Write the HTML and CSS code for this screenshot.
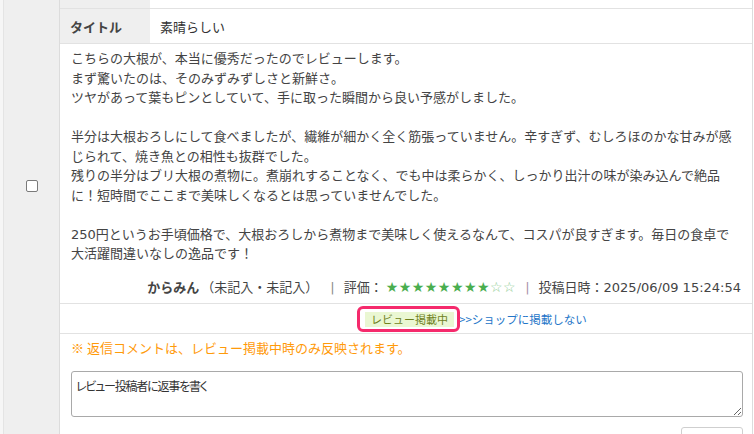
FILE: index.html
```html
<!DOCTYPE html>
<html lang="ja">
<head>
<meta charset="utf-8">
<title>レビュー詳細</title>
<link rel="stylesheet" href="styles.css">
</head>
<body>
<div class="page">
  <div class="check-col">
    <input type="checkbox" class="check" aria-label="選択">
  </div>
  <div class="detail">
    <div class="row row-top">
      <div class="label"></div>
      <div class="value"></div>
    </div>
    <div class="row row-title">
      <div class="label">タイトル</div>
      <div class="value">素晴らしい</div>
    </div>
    <div class="body">
      <p class="review">こちらの大根が、本当に優秀だったのでレビューします。<br>まず驚いたのは、そのみずみずしさと新鮮さ。<br>ツヤがあって葉もピンとしていて、手に取った瞬間から良い予感がしました。<br><br>半分は大根おろしにして食べましたが、繊維が細かく全く筋張っていません。辛すぎず、むしろほのかな甘みが感<br>じられて、焼き魚との相性も抜群でした。<br>残りの半分はブリ大根の煮物に。煮崩れすることなく、でも中は柔らかく、しっかり出汁の味が染み込んで絶品<br>に！短時間でここまで美味しくなるとは思っていませんでした。<br><br>250円というお手頃価格で、大根おろしから煮物まで美味しく使えるなんて、コスパが良すぎます。毎日の食卓で<br>大活躍間違いなしの逸品です！</p>
      <div class="meta"><b class="author">からみん</b><span>（未記入・未記入）</span><span class="sep">|</span>評価：<span class="stars">★★★★★★★★<span class="empty">☆☆</span></span><span class="sep sep-alt">|</span>投稿日時：2025/06/09 15:24:54</div>
    </div>
    <div class="status">
      <span class="badge-wrap"><span class="badge">レビュー掲載中</span></span><a class="toggle" href="#">&gt;&gt;ショップに掲載しない</a>
    </div>
    <div class="reply">
      <p class="note">※ 返信コメントは、レビュー掲載中時のみ反映されます。</p>
      <textarea class="reply-input" placeholder="レビュー投稿者に返事を書く"></textarea>
      <div class="actions"><button class="send" type="button" aria-label="返信する"></button></div>
    </div>
  </div>
</div>
</body>
</html>
```

FILE: styles.css
```css
html, body {
  margin: 0;
  padding: 0;
}

body {
  font-family: "Noto Sans CJK JP", "Noto Sans", sans-serif;
  font-size: 13px;
  color: #444;
  background: #fff;
}

.page {
  display: flex;
  align-items: stretch;
  width: 753px;
  height: 434px;
  overflow: hidden;
  background: #f6f6f6;
}

.check-col {
  flex: none;
  width: 55px;
  margin-left: 3px;
  border-left: 1px solid #e4e4e4;
  border-right: 1px solid #dcdcdc;
  background: #efefef;
  display: flex;
  justify-content: center;
  align-items: flex-start;
  padding-top: 180px;
  box-sizing: content-box;
}

.check {
  appearance: none;
  -webkit-appearance: none;
  width: 12px;
  height: 12px;
  margin: 0;
  border: 1px solid #7a7a7a;
  border-radius: 2px;
  background: #fff;
  box-sizing: border-box;
}

.detail {
  flex: 1;
  min-width: 0;
  background: #fff;
  border-right: 1px solid #dcdcdc;
}

.row {
  display: flex;
  border-bottom: 1px solid #e2e2e2;
  box-sizing: border-box;
}

.row-top {
  height: 9px;
}

.row-title {
  height: 35px;
}

.label {
  width: 90px;
  flex: none;
  background: #efefef;
  font-weight: bold;
  color: #444;
  padding-left: 10px;
  box-sizing: border-box;
  display: flex;
  align-items: center;
}

.value {
  flex: 1;
  padding-left: 10px;
  display: flex;
  align-items: center;
  color: #333;
}

.body {
  padding: 5px 11px 6px;
  border-bottom: 1px solid #e2e2e2;
}

.review {
  margin: 0;
  line-height: 19.5px;
  color: #444;
  white-space: nowrap;
  font-family: "DejaVu Sans", "Noto Sans CJK JP", sans-serif;
}

.meta {
  margin-top: 13px;
  line-height: 19.5px;
  text-align: right;
  color: #444;
  white-space: nowrap;
  font-family: "DejaVu Sans", "Noto Sans CJK JP", sans-serif;
}

.author {
  font-family: "Noto Sans CJK JP", sans-serif;
  font-weight: bold;
  margin-right: 2px;
}

.sep {
  color: #8a8a8a;
  margin: 0 9px 0 12px;
}

.sep-alt {
  color: #a88fa8;
  margin: 0 9px 0 9px;
}

.stars {
  color: #4aae4f;
  font-size: 14px;
  letter-spacing: 0.5px;
  margin-left: 3px;
}

.stars .empty {
  color: #8ccb8f;
}

.status {
  height: 30px;
  border-bottom: 1px solid #e2e2e2;
  box-sizing: border-box;
  display: flex;
  align-items: center;
  padding-left: 305px;
  padding-top: 1px;
}

.badge-wrap {
  position: relative;
  display: inline-flex;
}

.badge-wrap::after {
  content: "";
  position: absolute;
  left: -8px;
  right: -6px;
  top: -6px;
  bottom: -5px;
  border: 3px solid #f52a6c;
  border-radius: 6px;
}

.badge {
  background: #eaf7d2;
  color: #6f7f1c;
  font-size: 11px;
  line-height: 15px;
  padding: 0 6px;
}

.toggle {
  margin-left: 5px;
  color: #2375c8;
  font-size: 11.5px;
  text-decoration: none;
}

.reply {
  padding: 4px 9px 0 11px;
}

.note {
  margin: 0;
  line-height: 19.5px;
  color: #ff9a0a;
}

.reply-input {
  display: block;
  width: 100%;
  height: 46px;
  margin: 13px 0 0;
  box-sizing: border-box;
  border: 1px solid #a9a9a9;
  border-radius: 3px;
  padding: 6px 4px;
  font-family: "Noto Sans CJK JP", sans-serif;
  font-size: 12px;
  font-feature-settings: "palt";
  letter-spacing: -1.2px;
  line-height: 15px;
  color: #333;
  resize: vertical;
}

.reply-input::placeholder {
  color: #333;
  opacity: 1;
}

.actions {
  display: flex;
  justify-content: flex-end;
  margin-top: 10px;
}

.send {
  width: 62px;
  height: 28px;
  background: #fff;
  border: 1px solid #cfcfcf;
  border-radius: 3px;
}
```
